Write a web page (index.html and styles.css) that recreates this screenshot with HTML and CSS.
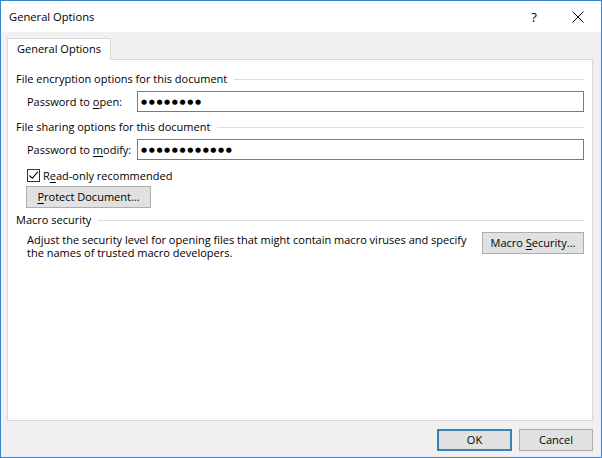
FILE: index.html
```html
<!DOCTYPE html>
<html>
<head>
<meta charset="utf-8">
<link rel="stylesheet" href="styles.css">
</head>
<body>
<div class="window">
  <div class="titlebar">
    <span class="title">General Options</span>
    <span class="help">?</span>
    <span class="close">
      <svg width="12" height="12" viewBox="0 0 12 12"><path d="M0.5 0.5 L11.5 11.5 M11.5 0.5 L0.5 11.5" stroke="#000" stroke-width="1" fill="none"/></svg>
    </span>
  </div>
  <div class="body">
    <div class="tabs">
      <div class="tab">General Options</div>
    </div>
    <div class="panel">
      <div class="group-head"><span>File encryption options for this document</span><i class="rule"></i></div>
      <div class="field-row">
        <span class="label">Password to <u>o</u>pen:</span>
        <div class="input"><span class="dots">●●●●●●●●</span></div>
      </div>
      <div class="group-head"><span>File sharing options for this document</span><i class="rule"></i></div>
      <div class="field-row">
        <span class="label">Password to <u>m</u>odify:</span>
        <div class="input"><span class="dots">●●●●●●●●●●●●</span></div>
      </div>
      <div class="check-row">
        <span class="checkbox">
          <svg width="11" height="11" viewBox="0 0 11 11"><path d="M1.5 5.5 L4.2 8.3 L9.8 1.8" stroke="#000" stroke-width="1.1" fill="none"/></svg>
        </span>
        <span>R<u>e</u>ad-only recommended</span>
      </div>
      <div class="btn-row">
        <button class="btn protect"><u>P</u>rotect Document...</button>
      </div>
      <div class="group-head macro-head"><span>Macro security</span><i class="rule"></i></div>
      <div class="macro-row">
        <p class="macro-text">Adjust the security level for opening files that might contain macro viruses and specify the names of trusted macro developers.</p>
        <button class="btn macro-btn">Macro <u>S</u>ecurity...</button>
      </div>
    </div>
    <div class="footer">
      <button class="btn ok">OK</button>
      <button class="btn cancel">Cancel</button>
    </div>
  </div>
</div>
</body>
</html>
```
FILE: styles.css
```css
* { box-sizing: border-box; }
html, body { margin: 0; padding: 0; }
body {
  font-family: "Open Sans", "Noto Sans", sans-serif;
  font-size: 11px;
  color: #000;
  background: #fff;
}
.window {
  width: 602px;
  height: 458px;
  border: 1px solid #3b82cf;
  display: flex;
  flex-direction: column;
  background: #f0f0f0;
}
.titlebar {
  height: 31px;
  background: #fff;
  display: flex;
  align-items: center;
  padding-left: 8px;
  flex: none;
}
.title { flex: 1; font-size: 11.2px; }
.help { width: 16px; font-size: 13px; margin-right: 30px; text-align: center; }
.close { width: 12px; height: 12px; margin-right: 17px; display: flex; }
.body {
  flex: 1;
  display: flex;
  flex-direction: column;
  padding: 6px 8px 0 6px;
}
.tabs { display: flex; height: 21px; }
.tab {
  width: 104px;
  height: 22px;
  background: #fff;
  border: 1px solid #d9d9d9;
  border-bottom: none;
  padding: 2px 0 0 9px;
  line-height: 16px;
  position: relative;
  z-index: 1;
}
.panel {
  height: 362px;
  background: #fff;
  border: 1px solid #d9d9d9;
  padding: 11px 8px 0 8px;
  display: flex;
  flex-direction: column;
}
.group-head {
  display: flex;
  align-items: center;
  height: 15px;
  line-height: 15px;
}
.group-head .rule {
  flex: 1;
  height: 1px;
  background: #dcdcdc;
  margin-left: 7px;
  margin-top: 1px;
}
.field-row {
  display: flex;
  align-items: center;
  padding-left: 11px;
  margin: 5px 0 7px 0;
}
.label { width: 110px; line-height: 15px; }
.input {
  flex: 1;
  height: 21px;
  border: 1px solid #7a7a7a;
  display: flex;
  align-items: center;
  padding-left: 3px;
}
.dots {
  font-family: "DejaVu Sans", sans-serif;
  font-size: 7px;
  letter-spacing: 1.6px;
  line-height: 10px;
}
.check-row {
  display: flex;
  align-items: center;
  padding-left: 11px;
  margin-top: 0;
  height: 17px;
  line-height: 15px;
}
.checkbox {
  width: 13px;
  height: 13px;
  border: 1px solid #333;
  display: flex;
  align-items: center;
  justify-content: center;
  margin-right: 3px;
  background: #fff;
}
.btn-row { padding-left: 10px; margin-top: 2px; }
.btn {
  font-family: inherit;
  font-size: 11px;
  color: #000;
  height: 22px;
  background: #e1e1e1;
  border: 1px solid #adadad;
  padding: 0;
  margin: 0;
  line-height: 18px;
}
.protect { width: 125px; }
.macro-head { margin-top: 4px; }
.macro-row {
  display: flex;
  align-items: flex-start;
  padding-left: 11px;
  margin-top: 5px;
}
.macro-text {
  margin: 0;
  flex: 1;
  line-height: 13px;
  padding-top: 1px;
  padding-right: 8px;
}
.macro-btn { width: 102px; margin-top: 0; }
.footer {
  display: flex;
  justify-content: flex-end;
  gap: 7px;
  padding-top: 8px;
  padding-right: 0;
}
.ok { width: 75px; border: 1px solid #3c7fb1; box-shadow: inset 0 0 0 1px #3c7fb1; }
.cancel { width: 74px; }
u { text-decoration: underline; text-underline-offset: 2px; }
```
